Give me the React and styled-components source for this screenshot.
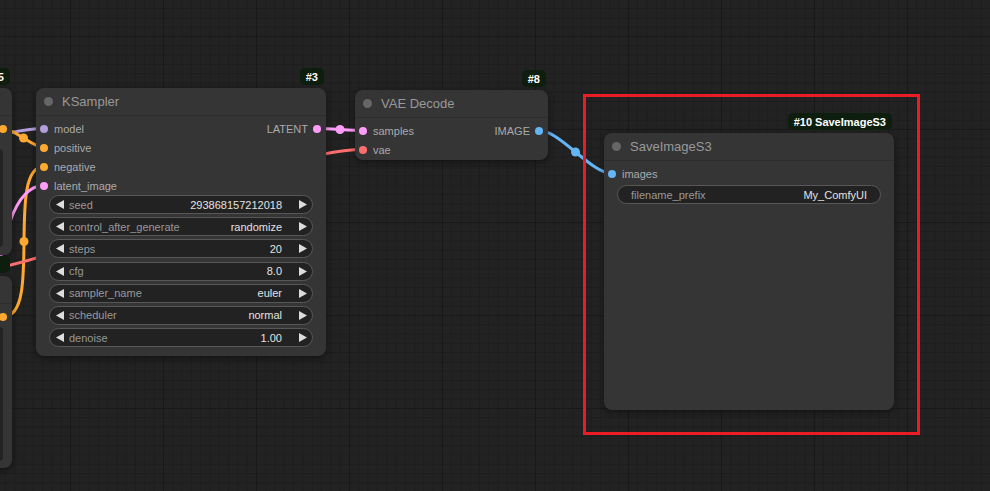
import styled, { createGlobalStyle } from 'styled-components'

const GlobalStyle = createGlobalStyle`
  html, body {
    margin: 0;
    height: 100%;
    overflow: hidden;
    background: #222222;
  }
  #root {
    height: 100%;
  }
  body {
    font-family: "Liberation Sans", Arial, sans-serif;
  }
`

// the graph canvas with its two-level grid
const Canvas = styled.div`
  position: relative;
  width: 100vw;
  height: 100vh;
  overflow: hidden;
  background-color: #222222;
  background-image:
    linear-gradient(to right, #191919 1px, transparent 1px),
    linear-gradient(to bottom, #191919 1px, transparent 1px),
    linear-gradient(to right, #1d1d1d 1px, transparent 1px),
    linear-gradient(to bottom, #1d1d1d 1px, transparent 1px);
  background-size: 93px 93px, 93px 93px, 9.3px 9.3px, 9.3px 9.3px;
  background-position: 70px 36px, 70px 36px, 70px 36px, 70px 36px;
`

const WireLayer = styled.svg`
  position: absolute;
  left: 0;
  top: 0;
  width: 100%;
  height: 100%;
`

const Node = styled.div`
  position: absolute;
  left: ${({ $x }) => $x}px;
  top: ${({ $y }) => $y}px;
  width: ${({ $w }) => $w}px;
  height: ${({ $h }) => $h}px;
  box-sizing: border-box;
  display: flex;
  flex-direction: column;
  background: #353535;
  border-radius: 8px;
  box-shadow: 0 2px 6px rgba(0, 0, 0, 0.45);
`

const Badge = styled.div`
  position: absolute;
  right: 2px;
  bottom: calc(100% + 3px);
  height: 17px;
  min-width: ${({ $min }) => $min || 0}px;
  padding: 0 6px;
  display: flex;
  align-items: center;
  background: #0e1e0e;
  border-radius: 5px;
  color: #ffffff;
  font-size: 11px;
  font-weight: 700;
  white-space: nowrap;
`

const TitleBar = styled.div`
  height: 27px;
  flex: none;
  display: flex;
  align-items: center;
  gap: 9px;
  padding-left: 8px;
  border-bottom: 1px solid #2d2d2d;
`

const TitleDot = styled.span`
  width: 9px;
  height: 9px;
  border-radius: 50%;
  background: #666666;
`

const TitleText = styled.span`
  color: #999999;
  font-size: 13px;
`

const Body = styled.div`
  padding-top: 3px;
  display: flex;
  flex-direction: column;
`

const SlotRow = styled.div`
  height: 19px;
  display: flex;
  align-items: center;
  justify-content: space-between;
`

const Slot = styled.div`
  display: flex;
  align-items: center;
  gap: ${({ $out }) => ($out ? 5 : 6)}px;
  padding: ${({ $out }) => ($out ? '0 5px 0 0' : '0 0 0 4px')};
  flex-direction: ${({ $out }) => ($out ? 'row-reverse' : 'row')};
  margin-left: ${({ $out }) => ($out ? 'auto' : '0')};
  color: #aaaaaa;
  font-size: 11px;
`

const Dot = styled.span`
  width: 8px;
  height: 8px;
  border-radius: 50%;
  background: ${({ $color }) => $color};
`

const WidgetList = styled.div`
  display: flex;
  flex-direction: column;
  gap: 3.2px;
  padding: ${({ $top }) => $top || 0}px 13px 0;
`

const Widget = styled.div`
  height: 19px;
  box-sizing: border-box;
  display: flex;
  align-items: center;
  padding: ${({ $arrows }) => ($arrows ? '0 5px 0 6px' : '0 13px 0 13px')};
  background: #222222;
  border: 1px solid #575757;
  border-radius: 10px;
  font-size: 11px;
`

const WidgetLabel = styled.span`
  flex: 1;
  margin-left: ${({ $arrows }) => ($arrows ? 5 : 0)}px;
  color: #999999;
`

const WidgetValue = styled.span`
  color: #e2e2e2;
  margin-right: ${({ $arrows }) => ($arrows ? 17 : 0)}px;
`

const TextPanel = styled.div`
  height: ${({ $h }) => $h}px;
  margin: ${({ $mt }) => $mt}px 9px 0 9px;
  background: #232323;
  border-radius: 4px;
`

const Highlight = styled.div`
  position: absolute;
  left: 583px;
  top: 94px;
  width: 337px;
  height: 341px;
  box-sizing: border-box;
  border: 3px solid #ec1c24;
`

const Arrow = ({ dir }) => (
  <svg width="8" height="9" viewBox="0 0 8 9">
    <path d={dir === 'left' ? 'M8 0 L0 4.5 L8 9 Z' : 'M0 0 L8 4.5 L0 9 Z'} fill="#dddddd" />
  </svg>
)

const C = {
  model: '#b39ddb',
  cond: '#ffa931',
  latent: '#ff9cf9',
  vae: '#ff6e6e',
  image: '#64b5f6',
}

const wires = [
  { from: [-120, 160], to: [44, 128.5], color: C.model },
  { from: [3, 128.5], to: [44, 147.5], color: C.cond },
  { from: [4, 316.5], to: [44, 166.5], color: C.cond },
  { from: [-60, 420], to: [44, 185.5], color: C.latent },
  { from: [-40, 272], to: [363, 149.5], color: C.vae },
  { from: [317, 128.5], to: [363, 130.5], color: C.latent },
  { from: [539, 130.5], to: [612, 173.5], color: C.image },
]

function spline([x1, y1], [x2, y2]) {
  const d = Math.hypot(x2 - x1, y2 - y1) * 0.25
  const c1 = [x1 + d, y1]
  const c2 = [x2 - d, y2]
  const mid = [
    0.125 * x1 + 0.375 * c1[0] + 0.375 * c2[0] + 0.125 * x2,
    0.125 * y1 + 0.375 * c1[1] + 0.375 * c2[1] + 0.125 * y2,
  ]
  return { d: `M${x1} ${y1} C${c1[0]} ${c1[1]} ${c2[0]} ${c2[1]} ${x2} ${y2}`, mid }
}

const samplerWidgets = [
  ['seed', '293868157212018'],
  ['control_after_generate', 'randomize'],
  ['steps', '20'],
  ['cfg', '8.0'],
  ['sampler_name', 'euler'],
  ['scheduler', 'normal'],
  ['denoise', '1.00'],
]

function Title({ children }) {
  return (
    <TitleBar>
      <TitleDot />
      {children && <TitleText>{children}</TitleText>}
    </TitleBar>
  )
}

function NumberWidget({ label, value }) {
  return (
    <Widget $arrows>
      <Arrow dir="left" />
      <WidgetLabel $arrows>{label}</WidgetLabel>
      <WidgetValue $arrows>{value}</WidgetValue>
      <Arrow dir="right" />
    </Widget>
  )
}

export default function App() {
  return (
    <Canvas>
      <GlobalStyle />

      <WireLayer viewBox="0 0 990 491">
        {wires.map((w, i) => {
          const { d, mid } = spline(w.from, w.to)
          return (
            <g key={i}>
              <path d={d} stroke={w.color} strokeWidth="3" fill="none" />
              <circle cx={mid[0]} cy={mid[1]} r="4.5" fill={w.color} />
            </g>
          )
        })}
      </WireLayer>

      {/* nodes that lie mostly past the left edge: only their right side shows */}
      <Node $x={-200} $y={88} $w={212} $h={167}>
        <Badge>#5</Badge>
        <Title />
        <Body>
          <SlotRow>
            <Slot $out>
              <Dot $color={C.cond} />
            </Slot>
          </SlotRow>
          <TextPanel $mt={11} $h={98} />
        </Body>
      </Node>

      <Node $x={-200} $y={276} $w={212} $h={192}>
        <Badge $min={30} />
        <Title />
        <Body>
          <SlotRow>
            <Slot $out>
              <Dot $color={C.cond} />
            </Slot>
          </SlotRow>
          <TextPanel $mt={1} $h={134} />
        </Body>
      </Node>

      <Node $x={36} $y={88} $w={290} $h={268}>
        <Badge>#3</Badge>
        <Title>KSampler</Title>
        <Body>
          <SlotRow>
            <Slot>
              <Dot $color={C.model} />
              model
            </Slot>
            <Slot $out>
              <Dot $color={C.latent} />
              LATENT
            </Slot>
          </SlotRow>
          <SlotRow>
            <Slot>
              <Dot $color={C.cond} />
              positive
            </Slot>
          </SlotRow>
          <SlotRow>
            <Slot>
              <Dot $color={C.cond} />
              negative
            </Slot>
          </SlotRow>
          <SlotRow>
            <Slot>
              <Dot $color={C.latent} />
              latent_image
            </Slot>
          </SlotRow>
          <WidgetList>
            {samplerWidgets.map(([label, value]) => (
              <NumberWidget key={label} label={label} value={value} />
            ))}
          </WidgetList>
        </Body>
      </Node>

      <Node $x={355} $y={90} $w={193} $h={70}>
        <Badge>#8</Badge>
        <Title>VAE Decode</Title>
        <Body>
          <SlotRow>
            <Slot>
              <Dot $color={C.latent} />
              samples
            </Slot>
            <Slot $out>
              <Dot $color={C.image} />
              IMAGE
            </Slot>
          </SlotRow>
          <SlotRow>
            <Slot>
              <Dot $color={C.vae} />
              vae
            </Slot>
          </SlotRow>
        </Body>
      </Node>

      <Node $x={604} $y={133} $w={290} $h={277}>
        <Badge>#10 SaveImageS3</Badge>
        <Title>SaveImageS3</Title>
        <Body>
          <SlotRow>
            <Slot>
              <Dot $color={C.image} />
              images
            </Slot>
          </SlotRow>
          <WidgetList $top={2}>
            <Widget>
              <WidgetLabel>filename_prefix</WidgetLabel>
              <WidgetValue>My_ComfyUI</WidgetValue>
            </Widget>
          </WidgetList>
        </Body>
      </Node>

      <Highlight />
    </Canvas>
  )
}
